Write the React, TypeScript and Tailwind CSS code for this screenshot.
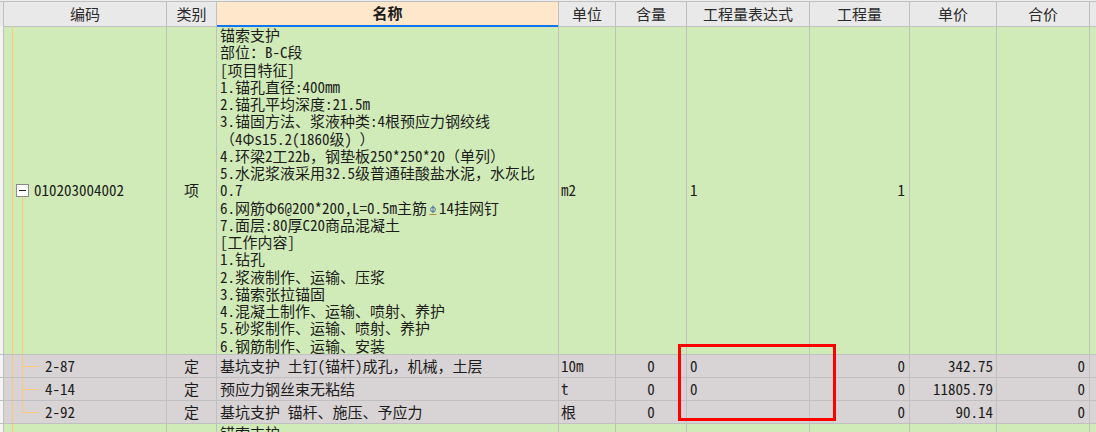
import React from 'react';

const COLS =
  'grid grid-cols-[4px_163px_50px_342px_57px_71px_123px_100px_87px_93px_6px]';
const LINE = 'border-[#c0c0c0]';
const ORANGE = 'bg-[#ffc778]';

type ChildRow = {
  code: string;
  type: string;
  name: string;
  unit: string;
  content: string;
  expr: string;
  qty: string;
  price: string;
  total: string;
};

const childRows: ChildRow[] = [
  { code: '2-87', type: '定', name: '基坑支护\u3000土钉(锚杆)成孔，机械，土层', unit: '10m', content: '0', expr: '0', qty: '0', price: '342.75', total: '0' },
  { code: '4-14', type: '定', name: '预应力钢丝束无粘结', unit: 't', content: '0', expr: '0', qty: '0', price: '11805.79', total: '0' },
  { code: '2-92', type: '定', name: '基坑支护\u3000锚杆、施压、予应力', unit: '根', content: '0', expr: '', qty: '0', price: '90.14', total: '0' },
];

// half-width latin everywhere, but keep the full-width punctuation full width
const T: React.FC<{ s: string }> = ({ s }) => (
  <>
    {s.split(/([\uFF00-\uFFEF]+)/).map((part, i) =>
      /[\uFF00-\uFFEF]/.test(part) ? (
        <span key={i} className="[font-feature-settings:normal]">
          {part}
        </span>
      ) : (
        part
      )
    )}
  </>
);

// rebar grade glyph (HRB400 style), drawn since no font has it
const Rebar = () => (
  <svg width="8" height="13" viewBox="0 0 8 13" className="inline-block align-[-2px] mx-[2px]">
    <circle cx="4" cy="6.5" r="2.4" fill="none" stroke="#4a6f9c" strokeWidth="1" />
    <line x1="4" y1="2.5" x2="4" y2="10" stroke="#4a6f9c" strokeWidth="1" />
    <line x1="0.5" y1="11.5" x2="7.5" y2="11.5" stroke="#b08a40" strokeWidth="1" />
  </svg>
);

const nameLines: React.ReactNode[] = [
  '锚索支护',
  '部位：B-C段',
  '[项目特征]',
  '1.锚孔直径:400mm',
  '2.锚孔平均深度:21.5m',
  '3.锚固方法、浆液种类:4根预应力钢绞线',
  '（4Φs15.2(1860级) ）',
  '4.环梁2工22b，钢垫板250*250*20（单列）',
  '5.水泥浆液采用32.5级普通硅酸盐水泥，水灰比',
  '0.7',
  <>6.网筋Φ6@200*200,L=0.5m主筋<Rebar />14挂网钉</>,
  '7.面层:80厚C20商品混凝土',
  '[工作内容]',
  '1.钻孔',
  '2.浆液制作、运输、压浆',
  '3.锚索张拉锚固',
  '4.混凝土制作、运输、喷射、养护',
  '5.砂浆制作、运输、喷射、养护',
  '6.钢筋制作、运输、安装',
];

const Cell: React.FC<{ className?: string; children?: React.ReactNode }> = ({ className = '', children }) => (
  <div className={`border-r border-b ${LINE} overflow-hidden whitespace-pre ${className}`}>{children}</div>
);

const headers = ['编码', '类别', '名称', '单位', '含量', '工程量表达式', '工程量', '单价', '合价'];

export default function App() {
  return (
    <div className="relative w-[1096px] h-[432px] overflow-hidden bg-[#ececec] font-['Noto_Sans_CJK_SC',sans-serif] text-[15px] text-[#1c1c1c] [font-feature-settings:'hwid']">
      <div className="h-px bg-[#ececec]" />

      {/* header */}
      <div className={`${COLS} h-[25px] border-t ${LINE} bg-[#e9e9e9]`}>
        <div className={`border-r border-b ${LINE}`} />
        {headers.map((h) =>
          h === '名称' ? (
            <div key={h} className={`border-r ${LINE} border-b-2 border-b-[#1574f0] bg-[#ffe7cb] flex items-center justify-center font-bold`}>
              {h}
            </div>
          ) : (
            <Cell key={h} className="flex items-center justify-center text-[#2a2a2a]">
              {h}
            </Cell>
          )
        )}
        <div className={`border-b ${LINE}`} />
      </div>

      {/* 清单项 */}
      <div className={`${COLS} h-[329px] bg-[#d1ebb8]`}>
        <Cell className="bg-[#f4f4f4]" />
        <Cell className="relative flex items-center pl-[12px]">
          <span className={`absolute left-[8px] top-0 bottom-0 w-px ${ORANGE}`} />
          <span className={`absolute left-[18px] top-[170px] bottom-0 w-px ${ORANGE}`} />
          <span className="relative w-[13px] h-[13px] border border-[#8a8a8a] bg-white flex items-center justify-center">
            <span className="w-[7px] h-px bg-[#222]" />
          </span>
          <span className="ml-[5px]">010203004002</span>
        </Cell>
        <Cell className="flex items-center justify-center">项</Cell>
        <Cell className="pl-[3px]">
          {nameLines.map((l, i) => (
            <div key={i} className="h-[17.25px] leading-[17.25px]">
              {typeof l === 'string' ? <T s={l} /> : l}
            </div>
          ))}
        </Cell>
        <Cell className="flex items-center pl-[2px]">m2</Cell>
        <Cell />
        <Cell className="flex items-center pl-[3px]">1</Cell>
        <Cell className="flex items-center justify-end pr-[4px]">1</Cell>
        <Cell />
        <Cell />
        <div className={`border-b ${LINE}`} />
      </div>

      {/* 定额子目 */}
      {childRows.map((r, i) => (
        <div key={r.code} className={`${COLS} h-[23px] bg-[#d8d3d4]`}>
          <Cell className="bg-[#f4f4f4]" />
          <Cell className="relative flex items-center pl-[41px]">
            <span className={`absolute left-[8px] top-0 bottom-0 w-px ${ORANGE}`} />
            <span
              className={`absolute left-[18px] top-0 w-px ${ORANGE} ${
                i === childRows.length - 1 ? 'h-[11px]' : 'bottom-0'
              }`}
            />
            <span className={`absolute left-[18px] top-[11px] w-[17px] h-px ${ORANGE}`} />
            {r.code}
          </Cell>
          <Cell className="flex items-center justify-center">{r.type}</Cell>
          <Cell className="flex items-center pl-[3px]">
            <T s={r.name} />
          </Cell>
          <Cell className="flex items-center pl-[2px]">{r.unit}</Cell>
          <Cell className="flex items-center justify-center">{r.content}</Cell>
          <Cell className="flex items-center pl-[3px]">{r.expr}</Cell>
          <Cell className="flex items-center justify-end pr-[4px]">{r.qty}</Cell>
          <Cell className="flex items-center justify-end pr-[3px]">{r.price}</Cell>
          <Cell className="flex items-center justify-end pr-[4px]">{r.total}</Cell>
          <div className={`border-b ${LINE}`} />
        </div>
      ))}

      {/* 下一条清单 */}
      <div className={`${COLS} h-[40px] bg-[#d1ebb8]`}>
        <Cell className="bg-[#f4f4f4]" />
        <Cell className="relative">
          <span className={`absolute left-[8px] top-0 bottom-0 w-px ${ORANGE}`} />
        </Cell>
        <Cell />
        <Cell className="pl-[3px] leading-[17.25px]">锚索支护</Cell>
        <Cell />
        <Cell />
        <Cell />
        <Cell />
        <Cell />
        <Cell />
        <div />
      </div>

      {/* 标注框 */}
      <div className="absolute left-[678px] top-[344px] w-[158px] h-[77px] border-[3px] border-[#ff0000]" />
    </div>
  );
}
